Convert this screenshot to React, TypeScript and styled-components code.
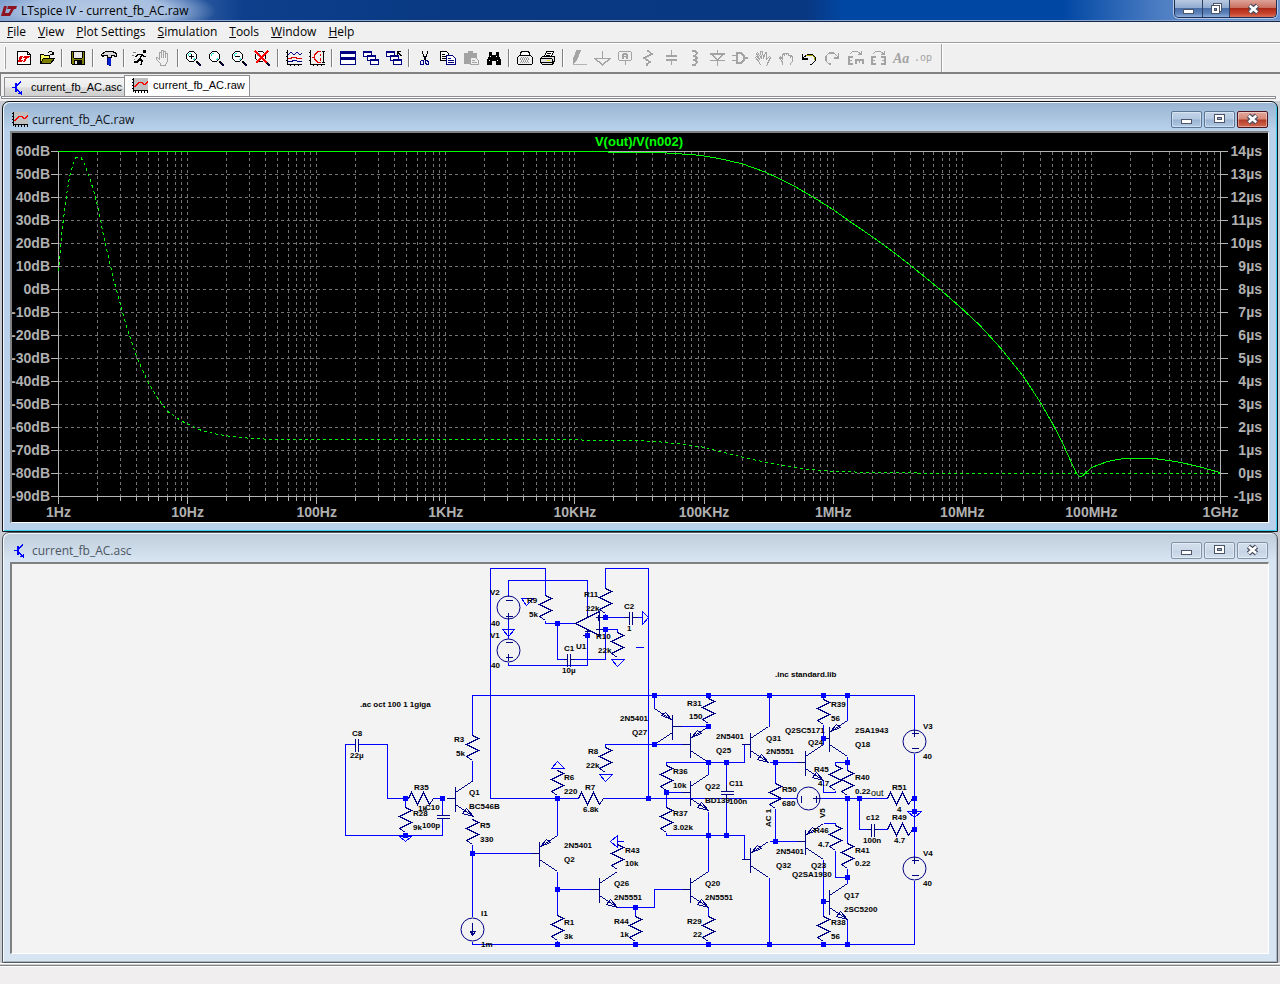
import React from 'react';
import styled, { createGlobalStyle, css } from 'styled-components';

const Global = createGlobalStyle`
  * { box-sizing: border-box; }
  body { margin: 0; background: #f0f0f0; font-family: "Open Sans", "Noto Sans", sans-serif; font-size: 12px; color: #000; }
  button { font: inherit; color: inherit; margin: 0; padding: 0; border: 0; background: none; }
`;

/* ---------- application frame ---------- */

const Page = styled.div`
  display: flex;
  flex-direction: column;
  min-height: 100vh;
`;

const TitleBar = styled.header`
  display: flex;
  align-items: center;
  gap: 4px;
  height: 22px;
  padding: 0 3px 0 1px;
  border-bottom: 1px solid #14284a;
  box-shadow: inset 0 -1px #8aa6d0;
  background:
    radial-gradient(ellipse 120px 26px at 96px 11px, #b6cae4 0, #a6bee0 60%, rgba(90, 130, 190, 0) 100%),
    linear-gradient(90deg, #6f93c8 0, #4a74b3 12%, #0d3f8c 19%, #093982 35%, #093882 63%, #0047a4 66%, #0047a4 83%, #5080c4 91%, #6c96d0 100%);
`;

const AppTitle = styled.h1`
  flex: 1;
  margin: 0;
  font-size: 12px;
  line-height: 20px;
  font-weight: 400;
  white-space: nowrap;
`;

const FrameButtons = styled.div`
  display: flex;
  align-self: flex-start;
  height: 18px;
  border: 1px solid #1d2f55;
  border-top: 0;
  border-radius: 0 0 5px 5px;
  box-shadow: 0 0 0 1px #b5c8e4;
  overflow: hidden;
`;

const FrameButton = styled.button<{ $close?: boolean }>`
  display: flex;
  align-items: center;
  justify-content: center;
  width: ${p => (p.$close ? 47 : 27)}px;
  border-left: 1px solid #2c4068;
  background: ${p =>
    p.$close
      ? 'linear-gradient(#dda398 0, #c9705f 45%, #ae2a18 50%, #c8452c 80%, #d8705a 100%)'
      : 'linear-gradient(#b9cae2 0, #91abd0 45%, #4a6ea8 50%, #6085bd 80%, #8fb0dd 100%)'};
  &:first-child { border-left: 0; }
`;

const MenuBar = styled.nav`
  display: flex;
  height: 21px;
  padding-left: 1px;
  border-bottom: 1px solid #a0a0a0;
`;

const MenuItem = styled.button`
  padding: 0 6px;
  font-size: 12px;
  line-height: 20px;
  white-space: nowrap;
`;

const ToolBar = styled.div`
  display: flex;
  align-items: center;
  height: 31px;
  padding-left: 4px;
  border-top: 1px solid #fff;
  border-bottom: 2px solid #808080;
`;

const Grip = styled.span`
  width: 2px;
  height: 22px;
  margin-right: 6px;
  border-right: 1px solid #a0a0a0;
  border-left: 1px solid #fff;
`;

const ToolButton = styled.button`
  display: flex;
  align-items: center;
  justify-content: center;
  flex: none;
  width: 23px;
  height: 22px;
  &:disabled { color: #a3a3a3; }
`;

const Divider = styled.span<{ $full?: boolean }>`
  flex: none;
  width: 2px;
  height: ${p => (p.$full ? 28 : 18)}px;
  margin: ${p => (p.$full ? '0 0 0 6px' : '0 3px')};
  border-left: 1px solid ${p => (p.$full ? '#a0a0a0' : '#808080')};
  border-right: 1px solid #fff;
`;

const TabStrip = styled.div`
  display: flex;
  align-items: flex-end;
  height: 22px;
  padding-left: 3px;
  border-left: 1px solid #808080;
`;

const Tab = styled.button<{ $active?: boolean }>`
  display: flex;
  align-items: center;
  gap: 4px;
  height: ${p => (p.$active ? 21 : 19)}px;
  padding: 0 4px 2px 7px;
  border: 1px solid #8c8e94;
  border-bottom: 0;
  font-family: "Liberation Sans", Arial, sans-serif;
  font-size: 11px;
  white-space: nowrap;
  background: ${p => (p.$active ? '#fff' : 'linear-gradient(#f4f4f4 0, #ebebeb 50%, #dcdcdc 55%, #cfcfcf 100%)')};
  ${p =>
    !p.$active &&
    css`
      padding: 0 2px 0 5px;
      border-right: 0;
    `}
`;

const TabEdge = styled.div`
  height: 3px;
  margin: 0 4px 2px 1px;
  border: 1px solid #8c8e94;
  background: #fff;
`;

/* ---------- document windows ---------- */

const Workspace = styled.main`
  flex: 1;
  padding: 0 2px;
  background: #c8ccd2;
`;

const Doc = styled.section<{ $active?: boolean }>`
  padding: 0 8px 8px 7px;
  border: 1px solid ${p => (p.$active ? '#10161c' : '#55595e')};
  border-radius: 7px 7px 0 0;
  box-shadow: inset 1px 1px #f2f8fc, inset -1px -1px ${p => (p.$active ? '#35d0ee' : '#aab6c4')};
  background: ${p =>
    p.$active
      ? 'linear-gradient(#98b4d2 0, #b9d1ea 28px)'
      : 'linear-gradient(#bfcddb 0, #d7e4f2 28px)'};
`;

const DocBar = styled.div<{ $active?: boolean }>`
  display: flex;
  align-items: center;
  height: 29px;
  padding: 5px 1px 0 2px;
  gap: 2px;
  color: ${p => (p.$active ? '#101418' : '#4c5660')};
`;

const DocTitle = styled.h2`
  flex: 1;
  margin: 0 0 0 1px;
  padding-top: 2px;
  font-size: 12px;
  line-height: 20px;
  font-weight: 400;
  white-space: nowrap;
`;

const DocButton = styled.button<{ $kind: 'blue' | 'red' | 'idle' }>`
  display: flex;
  align-items: center;
  justify-content: center;
  width: 31px;
  height: 17px;
  border-radius: 2px;
  border: 1px solid ${p => ({ blue: '#5b7596', red: '#4a1420', idle: '#8493a8' })[p.$kind]};
  box-shadow: inset 0 0 0 1px rgba(255, 255, 255, 0.4);
  background: ${p =>
    ({
      blue: 'linear-gradient(#c0d3e8 0, #b4cae2 48%, #98b2d0 52%, #b2cbe6 100%)',
      red: 'linear-gradient(#e3a89c 0, #d58674 48%, #b43a26 52%, #cf6a50 100%)',
      idle: 'linear-gradient(#d2deeb 0, #cbd8e7 50%, #c3d2e3 52%, #d2dfed 100%)',
    })[p.$kind]};
`;

const Canvas = styled.div<{ $dark?: boolean }>`
  border-style: solid;
  border-width: 2px 1px 1px 2px;
  border-color: #808080 #fff #fff #808080;
  background: ${p => (p.$dark ? '#000' : '#f3f3f3')};
`;

const Drawing = styled.svg`
  display: block;
  width: 100%;
  height: auto;
`;

const StatusBar = styled.footer`
  height: 21px;
  border-top: 1px solid #fff;
  box-shadow: inset 0 1px #d0d0d0, inset 0 2px #808488, inset 0 3px #fff;
  background: #f0eeee;
`;

/* ---------- window glyphs ---------- */

const Glyph = ({ kind }: { kind: 'min' | 'max' | 'restore' | 'close' }) => (
  <svg width="13" height="12" viewBox="0 0 13 12" shapeRendering={kind === 'close' ? 'auto' : 'crispEdges'}>
    {kind === 'min' && <rect x="1.5" y="6.5" width="10" height="4" rx="1" fill="#fff" stroke="#4c5668" />}
    {kind === 'max' && (
      <>
        <rect x="1.5" y="1.5" width="10" height="8" fill="#fff" stroke="#4c5668" />
        <rect x="4.5" y="4.5" width="4" height="2" fill="#93a9c4" stroke="#4c5668" />
      </>
    )}
    {kind === 'restore' && (
      <>
        <rect x="3.5" y="0.5" width="8" height="8" fill="#fff" stroke="#4c5668" />
        <rect x="1.5" y="2.5" width="8" height="8" fill="#fff" stroke="#4c5668" />
        <rect x="4.5" y="5.5" width="2" height="2" fill="#6f8fbc" stroke="#4c5668" />
      </>
    )}
    {kind === 'close' && (
      <>
        <path d="M2.5 2.5L10.5 9.5M10.5 2.5L2.5 9.5" stroke="#4c5064" strokeWidth="5" />
        <path d="M2.8 2.8L10.2 9.2M10.2 2.8L2.8 9.2" stroke="#fff" strokeWidth="2.6" />
      </>
    )}
  </svg>
);

const PlotIcon = () => (
  <svg width="17" height="17" viewBox="0 0 17 17" shapeRendering="crispEdges">
    <path d="M1 1h15v13H1z" fill="#c0c0c0" />
    <path d="M1.5 1v14M1 13.5h15M0 2.5h1M0 5.5h1M0 8.5h1M0 11.5h1M3.5 14v2M6.5 14v2M9.5 14v2M12.5 14v2M15.5 14v2" stroke="#000" fill="none" />
    <path d="M2 9.500h1l4-4h3l2 2h1l3-3" stroke="#f00" strokeWidth="1.800" fill="none" />
  </svg>
);

const TransistorIcon = () => (
  <svg width="17" height="17" viewBox="0 0 17 17" shapeRendering="crispEdges">
    <path d="M2 8.500h4" stroke="#00f" />
    <path d="M5 4h2v9H5z" fill="#00f" />
    <path d="M7 6.500l4-4M7 10.500l4 4M11.500 12v4M8 14.500h3" stroke="#00f" fill="none" />
  </svg>
);

/* ---------- toolbar icons, on a 16 x 16 grid ---------- */

const K = '#000';
const N = '#000080';

const icons: Record<string, React.ReactNode> = {
  new: (
    <>
      <path d="M1.500 1.500h10l3 3v10h-13z" fill="#fff" stroke={K} />
      <path d="M11.500 1.500v3h3" fill="none" stroke={K} />
      <path d="M4 6h3L5 10h2l-1 2H2zM8 6h6l-1 2h-2l-2 4H7l2-4H7z" fill="#e00000" />
    </>
  ),
  open: (
    <>
      <path d="M1.500 13.500v-9h3l1 1h5v3" fill="#ffff60" stroke={K} />
      <path d="M1.500 13.500l3-5h11l-4 5z" fill="#808000" stroke={K} />
      <path d="M9 2.500h1M10 1.500h3M13.500 2v3M11 4.500h3M14.500 2v3" stroke={K} fill="none" />
    </>
  ),
  save: (
    <>
      <path d="M1.500 1.500h13v13h-12l-1-1z" fill="#808000" stroke={K} />
      <path d="M4 2h8v6H4z" fill="#e8e8e8" />
      <path d="M4 10h8v5H4z" fill={K} />
      <path d="M5 11h2v3H5z" fill="#e8e8e8" />
      <path d="M3.500 2v6M12.500 2v6M4 8.500h8" stroke={K} />
    </>
  ),
  hammer: (
    <>
      <path d="M0.500 4.500l4-3h7l4 2v3h-1l-2-1h-2v2h-4v-2h-3l-2 1z" fill="#d8d8d8" stroke={K} />
      <path d="M7 8h3v7H7z" fill="#0020d0" />
      <path d="M6.500 8v7M8 15.500h2" stroke={N} />
    </>
  ),
  run: (
    <>
      <path d="M11 0h3v3h-3z" fill={K} />
      <path d="M6 4.500h4l2 2h2M10 4l-2 5 2 2-1 4M8 9l-3 3H2M6 4L4 7" stroke={K} strokeWidth="1.600" fill="none" />
      <path d="M1 2.500h3M0 5.500h2M2 9.500h1" stroke="#808080" />
    </>
  ),
  stop: <path d="M5.500 15.500v-2l-4-4v-2h1l2 2v-7h2v5v-7h2v7v-6h2v6v-4h2v8l-2 3v1z" fill="none" stroke="currentColor" />,
  zoomIn: <Lens mark="plus" />,
  zoomArea: <Lens />,
  zoomOut: <Lens mark="minus" />,
  zoomFit: (
    <>
      <Lens />
      <path d="M0 1l12 12M13 1L1 13" stroke="#f00" strokeWidth="2" />
    </>
  ),
  traces: (
    <>
      <path d="M1.500 0v15M1 14.500h15M0 2.500h1M0 6.500h1M0 10.500h1M4.500 14v2M8.500 14v2M12.500 14v2" stroke={K} />
      <path d="M2 5l3-3 3 3 3-3 3 3 2-2" stroke={N} fill="none" />
      <path d="M2 8.500h3l1-1h4l1 1h5" stroke="#e00000" fill="none" />
      <path d="M2 11.500h4l1-1h3l2 1h4" stroke={N} fill="none" />
    </>
  ),
  axes: (
    <>
      <path d="M1.500 0v15M1 14.500h15M0 2.500h1M0 6.500h1M0 10.500h1M4.500 14v2M8.500 14v2M12.500 14v2M14.500 1v12M13 1.500h3M13 12.500h3" stroke={K} />
      <path d="M12 1.500H9l-4 4v3l4 4h3M3 7.500h3M11.500 4v2M11.500 8v3" stroke="#e00000" fill="none" />
    </>
  ),
  tile: (
    <>
      <path d="M0.500 1.500h15v13h-15z" fill="#fff" stroke={N} />
      <path d="M0 1h16v3H0zM0 7h16v3H0z" fill={N} />
    </>
  ),
  cascade: <Cascade />,
  cascadeOut: (
    <>
      <Cascade />
      <path d="M11.500 5V1M15.500 6l-4-4M11 1.500h4" stroke={K} />
    </>
  ),
  cut: (
    <>
      <path d="M5.500 1v2l3 7M10.500 1v2l-3 7" stroke={K} fill="none" />
      <path d="M4.500 10.500h2v4h-3v-3zM9.500 10.500l2 1v3h-2l-1-2v-2z" fill="none" stroke={N} />
    </>
  ),
  copy: (
    <>
      <path d="M0.500 1.500h6l2 2v7h-8z" fill="#fff" stroke={K} />
      <path d="M2 4.500h3M2 6.500h4M2 8.500h4" stroke={K} />
      <path d="M6.500 5.500h6l3 3v6h-9z" fill="#fff" stroke={N} />
      <path d="M8 8.500h3M8 10.500h6M8 12.500h6" stroke={N} />
    </>
  ),
  paste: (
    <>
      <path d="M1 3h4V1h5v2h4v11H1z" fill="currentColor" />
      <path d="M7.500 7.500h5l3 3v4h-8z" fill="#f0f0f0" stroke="currentColor" />
      <path d="M9 10.500h3M9 12.500h5" stroke="currentColor" />
    </>
  ),
  find: (
    <>
      <path d="M3 2h3v3h4V2h3v4l2 4v5h-5v-4H6v4H1v-5l2-4z" fill={K} />
      <path d="M4 6.500h1M10 6.500h1M3 10.500h1M11 10.500h1" stroke="#fff" />
    </>
  ),
  preview: (
    <>
      <path d="M3.500 6.500v-4l2-1h6l1 2v3" fill="#fff" stroke={K} />
      <path d="M0.500 7.500l2-2h11l2 2v6l-1 1h-13l-1-1z" fill="#f0f0f0" stroke={K} />
      <path d="M4 7.500h8M3 9.500h10M4 11.500h8" stroke="#909090" strokeDasharray="1 1" />
      <path d="M3 8.500h10M4 10.500h8M3 12.500h10" stroke="#a0a0a0" strokeDasharray="1 1" />
    </>
  ),
  print: (
    <>
      <path d="M4.500 6.500l2-5h7l-2 5" fill="#fff" stroke={K} />
      <path d="M7 3.500h4M6 5.500h4" stroke={K} />
      <path d="M0.500 8.500l2-2h12v4l-2 4h-10l-2-2z" fill="#e0e0e0" stroke={K} />
      <path d="M1 8.500h11M1 12.500h11M12.500 9v5M14.500 7v5" stroke={K} />
      <path d="M7 10.500h3" stroke="#e8e000" />
    </>
  ),
  pencil: <path d="M6 0h4L5 11l-3 3V9zM2 14.500h14" fill="currentColor" stroke="currentColor" strokeWidth=".8" />,
  ground: <path d="M8.500 1v7M1 8.500h15l-7.500 6.500z" fill="none" stroke="currentColor" strokeWidth="1.400" />,
  label: (
    <>
      <path d="M2 1h12v1H2zM2 10h12v1H2zM1 2h1v8H1zM14 2h1v8h-1zM8 11h1v4H8z" fill="currentColor" />
      <path d="M5 9V4h1V3h4v1h1v5H9V7H7v2zM7 5v1h2V5z" fill="currentColor" fillRule="evenodd" />
    </>
  ),
  resistor: <path d="M8 0v1l4 3-8 4 6 4-3 2v2" fill="none" stroke="currentColor" strokeWidth="1.500" />,
  capacitor: <path d="M8 0h1v5h5v2H3V5h5zM3 9h11v2H9v4H8v-4H3z" fill="currentColor" />,
  inductor: <path d="M6 1h3l2 2-2 3H7h2l2 2-2 2H7h2l2 2-2 3H6" fill="none" stroke="currentColor" strokeWidth="1.500" />,
  diode: <path d="M8.500 0v4M8.500 10v6M1 4h15M3 4l5.500 6L14 4M1 10.500h15" fill="none" stroke="currentColor" strokeWidth="1.600" />,
  gate: <path d="M0 5.500h5M0 10.500h5M5 3v10h4l3-3V6L9 3zM12 8h4" fill="none" stroke="currentColor" strokeWidth="1.600" />,
  move: <path d="M5.500 15.500l-1-3-4-5 1-1 3 3-3-6 1-1 4 6-1-7h2l1 7 2-6h1v7l3-3 1 1-3 6-1 3" fill="none" stroke="currentColor" />,
  drag: <path d="M4.500 15v-3l-3-4 1-1 2 2v-4l1-1 1 1V3.500h2V5V3.500h2V5h2v2l1-1 1 1v4l-2 3v1" fill="none" stroke="currentColor" />,
  undo: (
    <>
      <path d="M4 7l3-3h4l3 3v4l-3 3H9" stroke={K} fill="none" />
      <path d="M5 6l2-1h4l2 2v3" stroke="#b0a800" fill="none" />
      <path d="M1.500 4v5h5M2 8l3-3" stroke={K} strokeWidth="1.300" fill="none" />
    </>
  ),
  redo: <path d="M7 14H5l-3-3V6l3-3h5l4 4v1M14.500 3v5h-5" stroke="currentColor" fill="none" strokeWidth="1.300" />,
  rotate: (
    <>
      <path d="M3 4l3-3h4l4 3M14.500 1v4M11 4.500h4" stroke="currentColor" fill="none" />
      <path d="M1 6h5v2H3v2h2v1H3v2h3v2H1zM8 9h9v5h-2v-3h-2v2h-1v-2h-2v3H8z" fill="currentColor" />
    </>
  ),
  mirror: (
    <>
      <path d="M3 4l3-3h4l4 3M14.500 1v4M11 4.500h4" stroke="currentColor" fill="none" />
      <path d="M1 6h5v2H3v2h2v1H3v2h3v2H1zM16 6h-5v2h3v2h-2v1h2v2h-3v2h5z" fill="currentColor" />
    </>
  ),
  text: (
    <text x="0" y="13" fontFamily="Liberation Serif" fontStyle="italic" fontWeight="700" fontSize="14" fill="currentColor">
      Aa
    </text>
  ),
  op: (
    <text x="-2" y="11" fontFamily="DejaVu Sans Mono, monospace" fontSize="10" fill="currentColor">
      .op
    </text>
  ),
};

function Lens({ mark }: { mark?: 'plus' | 'minus' }) {
  return (
    <>
      <path d="M3.500 1.500h4l3 3v4l-3 3h-4l-3-3v-4z" fill="#fff" stroke={K} />
      <path d="M3 3h2v1H3zM2 4h1v2H2zM8 8h1v2H7V9h1z" fill="#30e0e0" />
      <path d="M10 11h2v1h1v1h1v1h1v2h-2v-1h-1v-1h-1v-1h-1z" fill={K} />
      <path d="M12 13l3 3" stroke={N} />
      {mark && <path d={mark === 'plus' ? 'M3 6.500h5M5.500 4v5' : 'M3 6.500h5'} stroke={K} />}
    </>
  );
}

function Cascade() {
  return (
    <>
      {[[0, 1], [4, 5], [7, 9]].map(([x, y]) => (
        <g key={x}>
          <path d={`M${x + 0.5} ${y + 0.5}h8v5h-8z`} fill="#fff" stroke={N} />
          <path d={`M${x} ${y}h9v2h-9z`} fill={N} />
        </g>
      ))}
    </>
  );
}

const toolGroups: [string, string][][] = [
  [['new', 'New schematic'], ['open', 'Open']],
  [['save', 'Save']],
  [['hammer', 'Control panel']],
  [['run', 'Run'], ['stop', 'Halt']],
  [['zoomIn', 'Zoom in'], ['zoomArea', 'Zoom area'], ['zoomOut', 'Zoom out'], ['zoomFit', 'Zoom full extents']],
  [['traces', 'Pick visible traces'], ['axes', 'Autorange']],
  [['tile', 'Tile windows'], ['cascade', 'Cascade windows'], ['cascadeOut', 'Close all windows']],
  [['cut', 'Cut'], ['copy', 'Copy'], ['paste', 'Paste'], ['find', 'Find']],
  [['preview', 'Print preview'], ['print', 'Print']],
  [
    ['pencil', 'Wire'], ['ground', 'Ground'], ['label', 'Label net'], ['resistor', 'Resistor'],
    ['capacitor', 'Capacitor'], ['inductor', 'Inductor'], ['diode', 'Diode'], ['gate', 'Component'],
    ['move', 'Move'], ['drag', 'Drag'], ['undo', 'Undo'], ['redo', 'Redo'], ['rotate', 'Rotate'],
    ['mirror', 'Mirror'], ['text', 'Text'], ['op', 'SPICE directive'],
  ],
];

const disabledTools = new Set([
  'stop', 'paste', 'pencil', 'ground', 'label', 'resistor', 'capacitor', 'inductor', 'diode',
  'gate', 'move', 'drag', 'redo', 'rotate', 'mirror', 'text', 'op',
]);

/* ---------- waveform plot ---------- */

const X0 = 58.5;
const X1 = 1220.5;
const Y0 = 151.5;
const Y1 = 496.5;
const STEP = 23;
const DECADE = (X1 - X0) / 9;
const rows = Array.from({ length: 16 }, (_, i) => i);
const freqs = ['1Hz', '10Hz', '100Hz', '1KHz', '10KHz', '100KHz', '1MHz', '10MHz', '100MHz', '1GHz'];
const gridX: { x: number; major: boolean }[] = [];
for (let d = 0; d < 9; d++) {
  for (let k = 1; k < 10; k++) {
    gridX.push({ x: Math.floor(X0 + DECADE * (d + Math.log10(k))) + 0.5, major: k === 1 });
  }
}
gridX.push({ x: X1, major: true });

const gain =
  '58,151.500 608,151.500 608,152.500 663,152.700 673,153.500 694,154.700 704,156 718,158.300 742,163.700 765,172 781,179.300 794,186 813,197 833,209.500 852,223 872,236.500 894,252.500 910,265 923,275.500 942,291 962,308.700 980,325.500 1001,348.500 1023,376 1040,401.700 1052,422.700 1062,441.700 1071,461.700 1076,472.500 1079,476 1082,476.300 1086,472.500 1092,467.300 1107,461.700 1118,459.300 1128,458.400 1153,458.400 1170,460.700 1182,462.700 1200,467 1220,472.500';
const delay =
  '58.500,271 60,253 61.300,238 63.300,220 66.300,197 69.300,178 72.700,165 76,157.500 81,157.500 85,165 90,179 95,195 100,217 103,233 108,255 113,277 120,303 127,328 137,358 147,380 158,399 168,411.700 182,421.300 202,430.700 217,434.300 233,436.700 250,438.300 273,439.500 574,439.500 590,440.500 635,440.500 661,442 684,444.300 704,447.300 718,451 742,457 763,461.700 780,465.300 804,469 833,471.300 870,472.500 918,472.500';

const WaveformPlot = () => (
  <Drawing viewBox="12 133 1256 389" role="img" aria-label="Gain and group delay against frequency">
    <g shapeRendering="crispEdges" fill="none">
      <g stroke="#747474" strokeDasharray="3 3">
        {rows.slice(1, 15).map(i => (
          <path key={i} d={`M${X0} ${Y0 + i * STEP}H${i === 14 ? 918 : X1}`} />
        ))}
        {gridX.slice(1, -1).map(g => <path key={g.x} d={`M${g.x} ${Y0}V${Y1}`} />)}
      </g>
      <g stroke="#b4b4b4">
        <path d={`M${X0} ${Y0}H${X1}V${Y1}H${X0}z`} />
        {rows.map(i => <path key={i} d={`M51 ${Y0 + i * STEP}H58M1221 ${Y0 + i * STEP}H1228`} />)}
        {gridX.map(g => <path key={g.x} d={`M${g.x} ${Y1}v${g.major ? 7 : 4}`} />)}
      </g>
      <polyline points={delay} stroke="#0f0" strokeDasharray="3 3" />
      <path d="M918 473.500H1220" stroke="#0f0" strokeDasharray="3 3" />
      <polyline points={gain} stroke="#0f0" />
    </g>
    <g fontFamily="Liberation Sans, Arial, sans-serif" fontWeight="700" fontSize="14" fill="#b0b0b0">
      {rows.map(i => (
        <text key={i} x="50" y={156 + i * STEP} textAnchor="end">{60 - i * 10}dB</text>
      ))}
      {rows.map(i => (
        <text key={i} x="1262" y={156 + i * STEP} textAnchor="end">{14 - i}µs</text>
      ))}
      {freqs.map((f, i) => (
        <text key={f} x={X0 + DECADE * i} y="517" textAnchor="middle">{f}</text>
      ))}
      <text x="639" y="146" textAnchor="middle" fontSize="13" fill="#0f0">V(out)/V(n002)</text>
    </g>
  </Drawing>
);

/* ---------- schematic ---------- */

const wires = [
  'M472 735V695H914V729M472 760V780M472 844V916M472 941V944H914V880M914 753V856',
  'M355 744H345V835H442V818M358 744H387V798H408M405 798V807M405 832V835M433 798H443M442 798V815',
  'M472 853H530M490 798H578M490 798V568H545V595M545 620V623H575M508 596V580H587V612M508 619V638',
  'M508 662V665H587V635M605 588V568H648V798M605 613V617H623M636 617H642M557 623V659H563M574 659H605V629H617V632',
  'M654 695V708M680 726H708M605 747V744H682M708 695V698M708 723V726M666 765V762H744V744H749M769 726V695M769 762H797',
  'M666 790V807M666 792H682M708 774V762M708 811V871M666 832V835H744V859H749M726 762V784M726 802V835',
  'M603 798H796M820 798H887M775 762V783M775 808V841M769 841H797M769 877V944M635 907H654V889H682M708 907V916M708 941V944',
  'M557 798V835M557 795V798M557 871V915M557 940V944M557 889H591M617 907H635V916M635 941V944',
  'M823 695V699M823 724V744M847 720V695M847 756V770M847 795V843M823 780V792H835V790M835 765V762H847',
  'M859 798V829H866M878 829H887M912 798H914M912 829H914M823 823H835V825M835 850V877H847M847 868V883M823 859V916M823 941V944M847 919V944',
];

const junctions = [
  [405, 798], [442, 798], [405, 835], [472, 853], [557, 623], [587, 635], [605, 617], [605, 629],
  [654, 695], [708, 695], [769, 695], [823, 695], [847, 695], [708, 726], [654, 744], [708, 762],
  [726, 762], [775, 762], [666, 792], [557, 798], [648, 798], [708, 835], [726, 835], [775, 841],
  [557, 889], [635, 907], [557, 944], [635, 944], [708, 944], [769, 944], [823, 944], [847, 944],
  [823, 738], [847, 762], [847, 798], [859, 798], [914, 798], [914, 811], [914, 829], [847, 877], [823, 901],
];

const uprightResistors = [
  [472, 735], [472, 819], [405, 807], [545, 595], [605, 588], [617, 632], [605, 747], [708, 698],
  [666, 765], [666, 807], [775, 783], [557, 770], [557, 915], [617, 844], [635, 916], [708, 916],
  [823, 699], [835, 765], [847, 770], [835, 825], [847, 843], [823, 916],
];
const flatResistors = [[408, 798], [578, 798], [887, 798], [887, 829]];

const transistors: [number, number, 'npn' | 'pnp', boolean?][] = [
  [455, 798, 'npn'], [672, 726, 'pnp', true], [690, 744, 'pnp'], [690, 792, 'npn'], [690, 889, 'npn'],
  [750, 744, 'npn'], [750, 859, 'pnp'], [539, 853, 'pnp'], [599, 889, 'npn'], [829, 738, 'pnp'],
  [805, 762, 'npn'], [805, 841, 'pnp'], [829, 901, 'npn'],
];

const sources: [number, number, string][] = [
  [508, 607, 'M505 600h7M505 616h7M508 612v7'],
  [508, 650, 'M505 642h7M505 657h7M508 653v7'],
  [914, 741, 'M911 733h7M914 729v7M911 748h7'],
  [914, 868, 'M911 860h7M914 856v7M911 875h7'],
  [808, 798, 'M801 795v7M812 798h8M816 795v7'],
  [472, 929, 'M472 922v12M470 931h5l-3 4z'],
];

const grounds = [
  'M399 836h12l-6 5z', 'M502 629h12l-6 7z', 'M521 598h12l-7 7z', 'M611 659h13l-7 7z', 'M642 611v13l6-7z',
  'M599 774h13l-7 7z', 'M551 768h13l-7-7z', 'M617 835v12l-7-6zM617 841h6', 'M907 811h14l-7 6z',
];

const labels: [number, number, string][] = [
  [490, 595, 'V2'], [491, 626, '40'], [490, 638, 'V1'], [491, 668, '40'], [527, 603, 'R9'], [529, 617, '5k'],
  [584, 597, 'R11'], [586, 611, '22k'], [624, 609, 'C2'], [627, 631, '1'], [596, 639, 'R10'], [598, 653, '22k'],
  [576, 649, 'U1'], [564, 651, 'C1'], [562, 673, '10µ'], [620, 721, '2N5401'], [632, 735, 'Q27'], [588, 754, 'R8'],
  [586, 768, '22k'], [564, 780, 'R6'], [564, 794, '220'], [585, 790, 'R7'], [583, 812, '6.8k'], [673, 774, 'R36'],
  [673, 788, '10k'], [673, 816, 'R37'], [673, 830, '3.02k'], [564, 848, '2N5401'], [564, 862, 'Q2'],
  [625, 853, 'R43'], [625, 866, '10k'], [614, 886, 'Q26'], [614, 900, '2N5551'], [564, 925, 'R1'], [564, 939, '3k'],
  [614, 924, 'R44'], [620, 937, '1k'], [687, 924, 'R29'], [693, 937, '22'], [705, 886, 'Q20'], [705, 900, '2N5551'],
  [687, 706, 'R31'], [689, 719, '150'], [716, 739, '2N5401'], [716, 753, 'Q25'], [705, 789, 'Q22'],
  [705, 803, 'BD139'], [729, 786, 'C11'], [729, 804, '100n'], [766, 741, 'Q31'], [766, 754, '2N5551'],
  [782, 792, 'R50'], [782, 806, '680'], [776, 854, '2N5401'], [776, 868, 'Q32'], [785, 733, 'Q2SC5171'],
  [808, 745, 'Q24'], [831, 707, 'R39'], [831, 721, '56'], [855, 733, '2SA1943'], [855, 747, 'Q18'],
  [814, 772, 'R45'], [818, 786, '4.7'], [855, 780, 'R40'], [855, 794, '0.22'], [892, 790, 'R51'], [897, 812, '4'],
  [892, 820, 'R49'], [866, 820, 'c12'], [863, 843, '100n'], [894, 843, '4.7'], [923, 729, 'V3'], [923, 759, '40'],
  [923, 856, 'V4'], [923, 886, '40'], [814, 833, 'R46'], [818, 847, '4.7'], [855, 853, 'R41'], [855, 866, '0.22'],
  [811, 868, 'Q23'], [792, 877, 'Q2SA1930'], [844, 898, 'Q17'], [844, 912, '2SC5200'], [831, 925, 'R38'],
  [831, 939, '56'], [352, 736, 'C8'], [350, 758, '22µ'], [414, 790, 'R35'], [418, 811, '1k'], [425, 810, 'C10'],
  [413, 816, 'R28'], [413, 830, '9k'], [422, 828, '100p'], [469, 795, 'Q1'], [469, 809, 'BC546B'], [480, 828, 'R5'],
  [480, 842, '330'], [454, 742, 'R3'], [456, 756, '5k'], [481, 916, 'I1'], [481, 947, '1m'],
  [360, 707, '.ac oct 100 1 1giga'], [775, 677, '.inc standard.lib'],
];

const Transistor = ({ x, y, kind, flip }: { x: number; y: number; kind: 'npn' | 'pnp'; flip?: boolean }) => (
  <g transform={`translate(${x} ${y})${flip ? ' scale(-1 1)' : ''}`}>
    <path d="M-9 0H0M0-12V13M0-6L18-18M0 6L18 18" />
    <path d={kind === 'npn' ? 'M18 18L7 15L11 10z' : 'M1-7L7-14L11-11z'} />
  </g>
);

const Schematic = () => (
  <Drawing viewBox="12 564 1256 389" role="img" aria-label="Current feedback amplifier schematic">
    <g transform="translate(.5 .5)" shapeRendering="crispEdges" fill="none" stroke="#000084">
      <g stroke="#00f">
        {wires.map(d => <path key={d} d={d} />)}
        {grounds.map(d => <path key={d} d={d} />)}
      </g>
      {uprightResistors.map(([x, y]) => (
        <path key={`${x} ${y}`} d={`M${x} ${y}l6 3l-12 6l12 6l-12 6l6 4`} />
      ))}
      {flatResistors.map(([x, y]) => (
        <path key={`${x} ${y}`} d={`M${x} ${y}l3-6l6 12l6-12l6 12l4-6`} />
      ))}
      {transistors.map(([x, y, kind, flip]) => (
        <Transistor key={`${x} ${y}`} x={x} y={y} kind={kind} flip={flip} />
      ))}
      {sources.map(([x, y, marks]) => (
        <g key={`${x} ${y}`}>
          <circle cx={x} cy={y} r="11.500" shapeRendering="auto" />
          <path d={marks} />
        </g>
      ))}
      <path d="M355 738v13M358 738v13M436 815h13M436 818h13M629 611v13M632 611v13M623 617h6M632 617h5" />
      <path d="M567 653v13M570 653v13M563 659h4M570 659h4M720 791h13M720 794h13M726 784v7M726 794v8" />
      <path d="M871 823v13M874 823v13M866 829h5M874 829h4" />
      <path d="M575 623L599 611V635zM587 612v5M595 617h10M598 614v6M595 629h10M587 629v6M584 631h6M582 635h5" />
      <path d="M635 647h8" stroke="#00f" />
      <g fill="#00f" stroke="none">
        {junctions.map(([x, y]) => <rect key={`${x} ${y}`} x={x - 2.5} y={y - 2.5} width="5" height="5" />)}
      </g>
    </g>
    <g fontFamily="Liberation Sans, Arial, sans-serif" fontWeight="700" fontSize="8" fill="#000">
      {labels.map(([x, y, t]) => <text key={`${x} ${y}`} x={x} y={y}>{t}</text>)}
      <text x="871" y="796" fontSize="9" fontWeight="400">out</text>
      <text transform="translate(771 827) rotate(-90)">AC 1</text>
      <text transform="translate(825 818) rotate(-90)">V5</text>
    </g>
  </Drawing>
);

/* ---------- page ---------- */

const menus = ['File', 'View', 'Plot Settings', 'Simulation', 'Tools', 'Window', 'Help'];

const DocWindow = ({ title, active, icon, children }: {
  title: string;
  active?: boolean;
  icon: React.ReactNode;
  children: React.ReactNode;
}) => (
  <Doc $active={active}>
    <DocBar $active={active}>
      {icon}
      <DocTitle>{title}</DocTitle>
      <DocButton $kind={active ? 'blue' : 'idle'} aria-label="Minimize"><Glyph kind="min" /></DocButton>
      <DocButton $kind={active ? 'blue' : 'idle'} aria-label="Maximize"><Glyph kind="max" /></DocButton>
      <DocButton $kind={active ? 'red' : 'idle'} aria-label="Close"><Glyph kind="close" /></DocButton>
    </DocBar>
    <Canvas $dark={active}>{children}</Canvas>
  </Doc>
);

export default function App() {
  return (
    <Page>
      <Global />
      <TitleBar>
        <svg width="16" height="16" viewBox="0 0 16 16" aria-hidden="true">
          <path d="M3 3h3L4 10h4l-2 3H0zM7 3h9l-1 3h-2l-4 7H6l4-7H6z" fill="#8e1220" />
        </svg>
        <AppTitle>LTspice IV - current_fb_AC.raw</AppTitle>
        <FrameButtons>
          <FrameButton aria-label="Minimize"><Glyph kind="min" /></FrameButton>
          <FrameButton aria-label="Restore"><Glyph kind="restore" /></FrameButton>
          <FrameButton $close aria-label="Close"><Glyph kind="close" /></FrameButton>
        </FrameButtons>
      </TitleBar>
      <MenuBar>
        {menus.map(m => (
          <MenuItem key={m}><u>{m[0]}</u>{m.slice(1)}</MenuItem>
        ))}
      </MenuBar>
      <ToolBar role="toolbar">
        <Grip />
        {toolGroups.map((group, i) => (
          <React.Fragment key={i}>
            {i > 0 && <Divider />}
            {group.map(([id, label]) => (
              <ToolButton key={id} aria-label={label} disabled={disabledTools.has(id)}>
                <svg width="16" height="16" viewBox="0 0 16 16" overflow="visible" shapeRendering="crispEdges">
                  {icons[id]}
                </svg>
              </ToolButton>
            ))}
          </React.Fragment>
        ))}
        <Divider $full />
      </ToolBar>
      <TabStrip role="tablist">
        <Tab role="tab" aria-selected="false"><TransistorIcon />current_fb_AC.asc</Tab>
        <Tab role="tab" aria-selected="true" $active><PlotIcon />current_fb_AC.raw</Tab>
      </TabStrip>
      <TabEdge />
      <Workspace>
        <DocWindow title="current_fb_AC.raw" active icon={<PlotIcon />}><WaveformPlot /></DocWindow>
        <DocWindow title="current_fb_AC.asc" icon={<TransistorIcon />}><Schematic /></DocWindow>
      </Workspace>
      <StatusBar />
    </Page>
  );
}
